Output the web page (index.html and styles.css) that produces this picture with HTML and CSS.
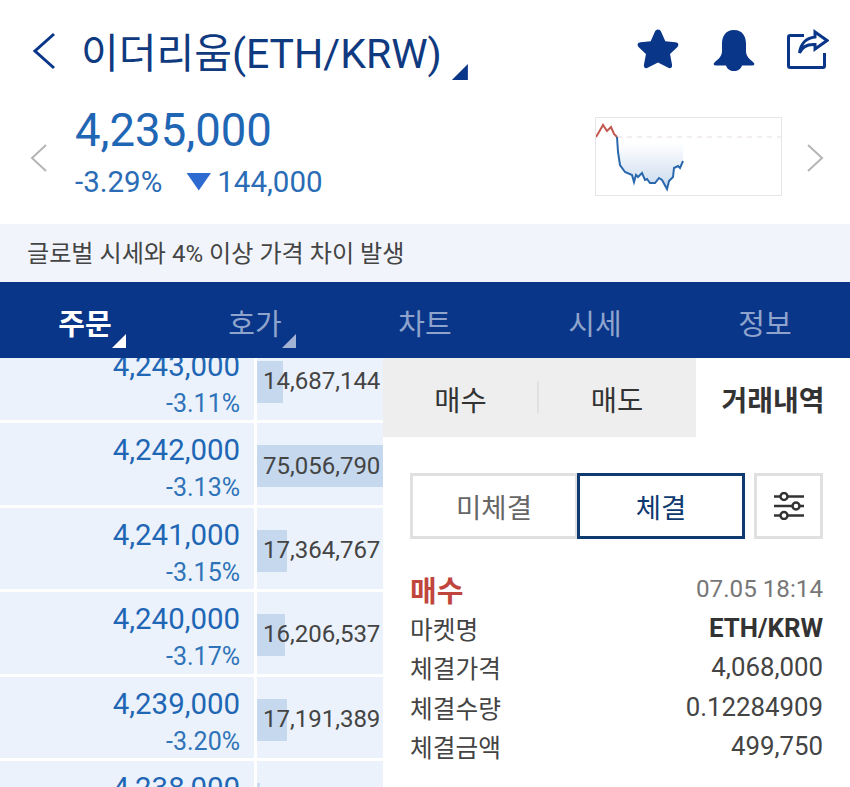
FILE: index.html
```html
<!DOCTYPE html>
<html lang="ko">
<head>
    <meta charset="UTF-8">
    <meta name="viewport" content="width=device-width, initial-scale=1.0">
    <title>이더리움(ETH/KRW)</title>
    <link rel="stylesheet" href="styles.css">
</head>
<body>
    <div class="page">
        <!-- Titre et icones -->
        <header class="top-bar">
            <svg class="back-icon" width="24" height="38" viewBox="0 0 24 38"><path d="M22 2 L3 19 L22 36"/></svg>
            <h1 class="coin-title">이더리움(ETH/KRW)</h1>
            <span class="corner corner-title"></span>
            <div class="top-icons">
                <svg width="46" height="46" viewBox="0 0 44 44"><path class="icon-fill" d="M22 2.5 C23.6 2.5 24.5 3.6 25.2 5 L29 13.6 L38.6 14.7 C41.5 15 42.4 17.3 40.4 19.3 L33.5 25.9 L35.4 35.8 C36 38.8 33.9 40.3 31.4 38.8 L22 33.9 L12.6 38.8 C10.1 40.3 8 38.8 8.6 35.8 L10.5 25.9 L3.6 19.3 C1.6 17.3 2.5 15 5.4 14.7 L15 13.6 L18.8 5 C19.5 3.6 20.4 2.5 22 2.5 Z"/></svg>
                <svg width="44" height="44" viewBox="0 0 44 44"><path class="icon-fill" d="M22 2 C31 2 34 9 34 16 L34 23 C34 29 38 31 41.5 34.5 C43 36 42.5 37.5 40 37.5 L30 37.5 C29 41 26 43 22 43 C18 43 15 41 14 37.5 L4 37.5 C1.500 37.5 1 36 2.500 34.500 C6 31 10 29 10 23 L10 16 C10 9 13 2 22 2 Z"/></svg>
                <svg width="42" height="42" viewBox="0 0 42 42"><path class="icon-line" d="M17 6.500 L3 6.500 C2 6.500 1.500 7 1.500 8 L1.500 37 C1.500 38 2 38.500 3 38.500 L36 38.500 C37 38.500 37.500 38 37.500 37 L37.500 24"/><path class="icon-line" d="M28 3 L40 11.500 L28 20 L28 15.500 C20 15 15 18 12.500 24 C13.500 15 19 9 28 8 Z"/></svg>
            </div>
        </header>

        <!-- Prix courant et mini graphique -->
        <section class="price-row">
            <svg class="side-arrow" width="18" height="30" viewBox="0 0 18 30"><path d="M16 2 L2 15 L16 28"/></svg>
            <div class="price-box">
                <div class="price-now">4,235,000</div>
                <div class="price-change">
                    <span>-3.29%</span>
                    <span class="change-value"><i class="down-mark"></i>144,000</span>
                </div>
            </div>
            <svg class="mini-chart" width="187" height="79" viewBox="0 0 187 79">
                <defs>
                    <linearGradient id="chart-fill" x1="0" y1="0" x2="0" y2="1">
                        <stop offset="0" stop-color="#ffffff"/>
                        <stop offset="1" stop-color="#c9daee"/>
                    </linearGradient>
                </defs>
                <path fill="url(#chart-fill)" d="M23 26 L88 26 L88 44 L85 51 L83 49 L79 51 L78 60 L74 64 L72 72 L67 63 L64 61 L60 66 L55 66 L52 62 L50 63 L47 56 L43 60 L41 58 L39 65 L37 58 L30 55 L25 48 L23 35 Z"/>
                <line x1="22" y1="20" x2="186" y2="20" class="chart-base"/>
                <polyline class="chart-up" points="1,20 4,15 8,8 12,14 16,10 19,17 22,20"/>
                <polyline class="chart-down" points="22,20 23,35 25,48 30,55 37,58 39,65 41,58 43,60 47,56 50,63 52,62 55,66 60,66 64,61 67,63 72,72 74,64 78,60 79,51 83,49 85,51 88,44"/>
            </svg>
            <svg class="side-arrow" width="18" height="30" viewBox="0 0 18 30"><path d="M2 2 L16 15 L2 28"/></svg>
        </section>

        <div class="notice">글로벌 시세와 4% 이상 가격 차이 발생</div>

        <nav class="main-nav">
            <a class="nav-item active">주문<span class="corner corner-nav"></span></a>
            <a class="nav-item">호가<span class="corner corner-nav"></span></a>
            <a class="nav-item">차트</a>
            <a class="nav-item">시세</a>
            <a class="nav-item">정보</a>
        </nav>

        <main class="content">
            <!-- Carnet d'ordres -->
            <div class="order-book">
                <div class="ob-row">
                    <div class="ob-price"><b>4,243,000</b><span>-3.11%</span></div>
                    <div class="ob-volume"><i class="vol-bar" style="width: 26px"></i><span>14,687,144</span></div>
                </div>
                <div class="ob-row">
                    <div class="ob-price"><b>4,242,000</b><span>-3.13%</span></div>
                    <div class="ob-volume"><i class="vol-bar" style="width: 126px"></i><span>75,056,790</span></div>
                </div>
                <div class="ob-row">
                    <div class="ob-price"><b>4,241,000</b><span>-3.15%</span></div>
                    <div class="ob-volume"><i class="vol-bar" style="width: 30px"></i><span>17,364,767</span></div>
                </div>
                <div class="ob-row">
                    <div class="ob-price"><b>4,240,000</b><span>-3.17%</span></div>
                    <div class="ob-volume"><i class="vol-bar" style="width: 28px"></i><span>16,206,537</span></div>
                </div>
                <div class="ob-row">
                    <div class="ob-price"><b>4,239,000</b><span>-3.20%</span></div>
                    <div class="ob-volume"><i class="vol-bar" style="width: 30px"></i><span>17,191,389</span></div>
                </div>
                <div class="ob-row">
                    <div class="ob-price"><b>4,238,000</b></div>
                    <div class="ob-volume"><i class="vol-bar" style="width: 3px"></i></div>
                </div>
            </div>

            <!-- Panneau de droite -->
            <section class="trade-panel">
                <div class="panel-tabs">
                    <div class="panel-tab tab-buy">매수</div>
                    <div class="panel-tab tab-sell">매도</div>
                    <div class="panel-tab selected">거래내역</div>
                </div>
                <div class="filter-row">
                    <button class="seg-btn">미체결</button>
                    <button class="seg-btn seg-active">체결</button>
                    <button class="filter-btn">
                        <svg width="32" height="28" viewBox="0 0 32 28">
                            <path class="filter-line" d="M1 4.500 H7 M15 4.500 H31 M1 14 H19 M27 14 H31 M1 23.500 H7 M15 23.500 H31"/>
                            <circle class="filter-dot" cx="11" cy="4.500" r="3.500"/>
                            <circle class="filter-dot" cx="23" cy="14" r="3.500"/>
                            <circle class="filter-dot" cx="11" cy="23.500" r="3.500"/>
                        </svg>
                    </button>
                </div>
                <div class="trade-info">
                    <div class="info-row">
                        <span class="trade-side">매수</span>
                        <span class="trade-date">07.05 18:14</span>
                    </div>
                    <div class="info-row"><span class="info-label">마켓명</span><strong>ETH/KRW</strong></div>
                    <div class="info-row"><span class="info-label">체결가격</span><span>4,068,000</span></div>
                    <div class="info-row"><span class="info-label">체결수량</span><span>0.12284909</span></div>
                    <div class="info-row"><span class="info-label">체결금액</span><span>499,750</span></div>
                </div>
            </section>
        </main>
    </div>
</body>
</html>
```

FILE: styles.css
```css
/* Base */
html, body {
    margin: 0;
    padding: 0;
    background: #fff;
}

body {
    font-family: Roboto, "Noto Sans CJK KR", sans-serif;
    color: #333;
}

.page {
    width: 850px;
    height: 787px;
    overflow: hidden;
    display: flex;
    flex-direction: column;
}

/* Titre */
.top-bar {
    height: 100px;
    padding: 0 21px 0 32px;
    display: flex;
    align-items: center;
    flex-shrink: 0;
    box-sizing: border-box;
}

.back-icon {
    margin-top: 2px;
}

.back-icon path {
    fill: none;
    stroke: #0a3689;
    stroke-width: 3;
}

.coin-title {
    margin: 0 0 0 25px;
    font-size: 41px;
    font-weight: 400;
    color: #0f3a80;
    white-space: nowrap;
}

.corner {
    display: block;
    clip-path: polygon(100% 0, 100% 100%, 0 100%);
}

.corner-title {
    width: 16px;
    height: 16px;
    margin: 44px 0 0 10px;
    background: #0a3689;
}

.top-icons {
    margin-left: auto;
    display: flex;
    align-items: center;
    gap: 31px;
}

.icon-fill {
    fill: #0a3689;
}

.icon-line {
    fill: none;
    stroke: #0a3689;
    stroke-width: 3;
}

/* Prix */
.price-row {
    height: 124px;
    padding: 0 26px 0 30px;
    display: flex;
    align-items: center;
    flex-shrink: 0;
    box-sizing: border-box;
}

.side-arrow {
    margin-bottom: 8px;
}

.side-arrow path {
    fill: none;
    stroke: #b5b5b5;
    stroke-width: 2;
}

.price-box {
    margin-left: 27px;
    margin-bottom: 21px;
    flex: 1;
}

.price-now {
    font-size: 45.500px;
    line-height: 52px;
    color: #1f66b5;
}

.price-change {
    display: flex;
    align-items: center;
    margin-top: 8px;
    font-size: 29.500px;
    line-height: 34px;
    color: #2a6cb5;
}

.change-value {
    display: flex;
    align-items: center;
    margin-left: 24px;
}

.down-mark {
    width: 25px;
    height: 18px;
    margin-right: 6px;
    background: #2e6bd0;
    clip-path: polygon(0 0, 100% 0, 50% 100%);
}

.mini-chart {
    margin: 0 24px 11px 0;
    outline: 1px solid #e6e6ea;
    outline-offset: -1px;
}

.chart-base {
    stroke: #e9dede;
    stroke-width: 1;
    stroke-dasharray: 5 5;
}

.chart-up, .chart-down {
    fill: none;
    stroke-width: 2;
}

.chart-up {
    stroke: #c2574f;
}

.chart-down {
    stroke: #2a68ad;
}

/* Bandeau */
.notice {
    height: 58px;
    line-height: 60px;
    padding-left: 27px;
    flex-shrink: 0;
    background: #f1f4fa;
    font-size: 24.100px;
    color: #444;
}

/* Navigation */
.main-nav {
    height: 76px;
    display: flex;
    flex-shrink: 0;
    background: #0a3689;
    position: relative;
    z-index: 2;
}

.nav-item {
    flex: 1;
    display: flex;
    align-items: center;
    justify-content: center;
    padding-top: 3px;
    position: relative;
    font-size: 29px;
    color: #8fa4cc;
}

.nav-item.active {
    color: #fff;
    font-weight: 700;
}

.corner-nav {
    position: absolute;
    left: 112px;
    top: 52px;
    width: 14px;
    height: 14px;
    background: #a3b3d4;
}

.active .corner-nav {
    background: #fff;
}

/* Contenu */
.content {
    flex: 1;
    display: flex;
    min-height: 0;
}

.order-book {
    width: 383px;
    margin-top: -19px;
    flex-shrink: 0;
    display: flex;
    flex-direction: column;
    gap: 3px;
}

.ob-row {
    height: 81.400px;
    display: flex;
    gap: 3px;
    flex-shrink: 0;
}

.ob-price {
    width: 254px;
    box-sizing: border-box;
    padding-right: 14px;
    background: #ebf2fb;
    display: flex;
    flex-direction: column;
    align-items: flex-end;
    color: #1f66b5;
}

.ob-price b {
    margin-top: 8px;
    font-weight: 400;
    font-size: 29.400px;
    line-height: 39px;
}

.ob-price span {
    font-size: 25px;
    line-height: 36px;
    color: #2f73b8;
}

.ob-volume {
    flex: 1;
    background: #ebf2fb;
    display: flex;
    align-items: center;
    position: relative;
    font-size: 24px;
    color: #444;
}

.vol-bar {
    position: absolute;
    left: 0;
    top: 22px;
    height: 42px;
    background: #c5d8ee;
}

.ob-volume span {
    position: relative;
    margin: 3px 0 0 6px;
}

/* Panneau de droite */
.trade-panel {
    flex: 1;
    background: #fff;
    display: flex;
    flex-direction: column;
}

.panel-tabs {
    height: 79px;
    display: flex;
    flex-shrink: 0;
}

.panel-tab {
    background: #eeeeee;
    display: flex;
    align-items: center;
    justify-content: center;
    padding-top: 2px;
    box-sizing: border-box;
    font-size: 28.500px;
    color: #333;
    position: relative;
}

.tab-buy {
    width: 155px;
}

.tab-sell {
    width: 158px;
}

.tab-sell::before {
    content: "";
    position: absolute;
    left: -1px;
    top: 23px;
    height: 32px;
    width: 2px;
    background: #e0e0e0;
}

.panel-tab.selected {
    flex: 1;
    background: #fff;
    font-size: 28px;
    font-weight: 700;
}

.filter-row {
    margin: 36px 27px 0;
    height: 66px;
    display: flex;
}

.seg-btn {
    width: 168px;
    background: #fff;
    border: 3px solid #e0e0e0;
    font-family: inherit;
    font-size: 27.500px;
    color: #666;
    padding: 0;
}

.seg-active {
    margin-left: -1px;
    border-color: #0f3a70;
    color: #0f3a70;
    position: relative;
}

.filter-btn {
    width: 69px;
    margin-left: 9px;
    background: #fff;
    border: 3px solid #e0e0e0;
    padding: 0;
    display: flex;
    align-items: center;
    justify-content: center;
}

.filter-line, .filter-dot {
    fill: none;
    stroke: #333;
    stroke-width: 2.500;
}

.trade-info {
    margin: 30px 27px 0;
}

.info-row {
    height: 39.300px;
    display: flex;
    align-items: center;
    justify-content: space-between;
    font-size: 25.800px;
    color: #444;
}

.info-label {
    font-size: 24.700px;
}

.info-row strong {
    font-weight: 700;
    color: #333;
}

.trade-side {
    font-weight: 700;
    font-size: 29px;
    color: #c0453c;
}

.trade-date {
    font-size: 24.200px;
    color: #777;
}
```
